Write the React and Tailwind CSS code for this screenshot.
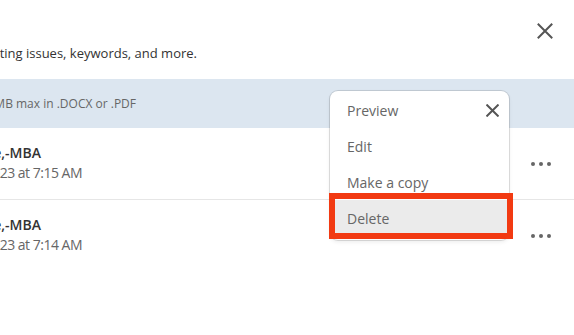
import React from 'react';

const font = { fontFamily: '"Open Sans", "Liberation Sans", sans-serif' };

function CloseIcon({ size = 16, stroke = 2, className = '' }) {
  return (
    <svg width={size} height={size} viewBox="0 0 16 16" className={className}>
      <path d="M1.5 1.5 L14.5 14.5 M14.5 1.5 L1.5 14.5" stroke="currentColor" strokeWidth={stroke} strokeLinecap="square" fill="none" />
    </svg>
  );
}

function Dots() {
  return (
    <div className="flex gap-[4px] mr-[23px]">
      <span className="w-[4px] h-[4px] rounded-full bg-[#666]" />
      <span className="w-[4px] h-[4px] rounded-full bg-[#666]" />
      <span className="w-[4px] h-[4px] rounded-full bg-[#666]" />
    </div>
  );
}

function ResumeRow({ name, date, last }) {
  return (
    <div className={`flex items-center justify-between ${last ? 'h-[71px]' : 'h-[72px] border-b border-[#e6e6e6]'}`}>
      <div className="self-start pt-[15px]">
        <div className="w-[41px] flex justify-end whitespace-nowrap text-[14px] leading-[20px] font-semibold text-[#333]">{name}</div>
        <div className="w-[82px] flex justify-end whitespace-nowrap text-[14px] tracking-[-0.5px] leading-[20px] text-[#666]">{date}</div>
      </div>
      <Dots />
    </div>
  );
}

const menuItems = ['Preview', 'Edit', 'Make a copy', 'Delete'];

export default function App() {
  return (
    <div className="relative w-[574px] h-[335px] bg-white overflow-hidden" style={font}>
      {/* header */}
      <div className="h-[79px]">
        <div className="flex justify-end pt-[23px] pr-[21px] text-[#555]">
          <CloseIcon />
        </div>
        <div className="mt-[4px] w-[197px] flex justify-end whitespace-nowrap text-[13px] leading-[20px] text-[#333]">
          Get feedback on formatting issues, keywords, and more.
        </div>
      </div>

      {/* upload bar */}
      <div className="h-[49px] bg-[#dce6f0] flex items-center">
        <div className="w-[136px] flex justify-end whitespace-nowrap text-[12px] text-[#666]">
          Upload resume 5MB max in .DOCX or .PDF
        </div>
      </div>

      <ResumeRow name="Jane Doe,-MBA" date="Mar 3, 2023 at 7:15 AM" />
      <ResumeRow name="Jane Doe,-MBA" date="Mar 3, 2023 at 7:14 AM" last />

      {/* dropdown menu */}
      <div className="absolute left-[330px] top-[91px] w-[179px] pt-[1px] pb-[4px] bg-white rounded-[8px] shadow-[0_0_0_1px_rgba(0,0,0,0.12),0_2px_4px_rgba(0,0,0,0.08)]">
        {menuItems.map((item, i) => (
          <div
            key={item}
            className={`h-[36px] flex items-center justify-between pl-[17px] pr-[10px] text-[14px] text-[#666] ${item === 'Delete' ? 'bg-[#ebebeb]' : ''}`}
          >
            <span>{item}</span>
            {i === 0 && <CloseIcon size={13} stroke={2.4} className="text-[#555]" />}
          </div>
        ))}
      </div>

      {/* highlight annotation */}
      <div className="absolute left-[329px] top-[193px] w-[184px] h-[46px] border-[6px] border-[#f23a12]" />
    </div>
  );
}
